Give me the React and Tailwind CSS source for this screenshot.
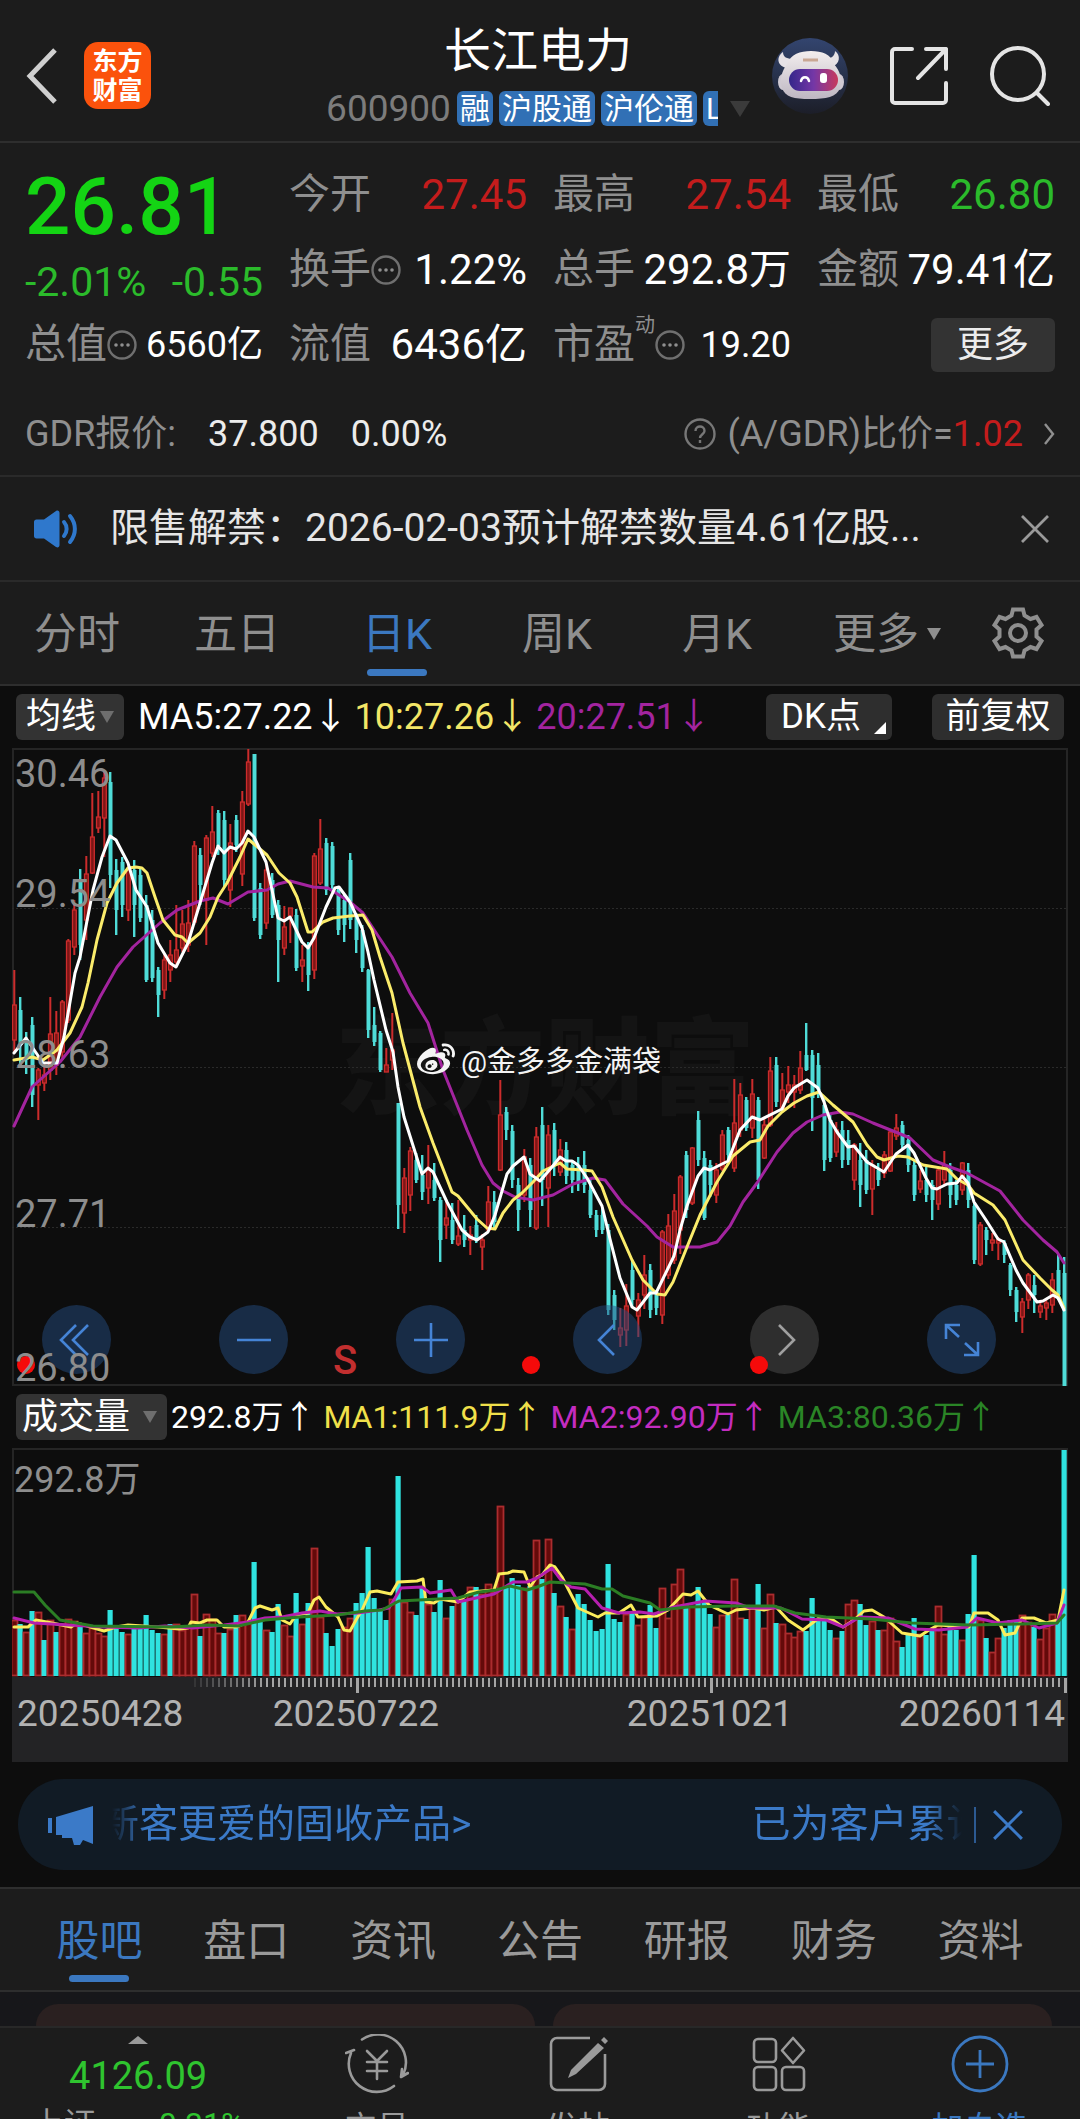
import { useState } from "react";
import { FaWeibo } from "react-icons/fa";

const UP = "#cc2c2c";
const DOWN = "#4fdcd8";

// each row: direction, high, low, body top, body bottom
const candles = `
r 230 312 265 300|c 257 325 270 305|c 292 334 300 320|c 277 367 285 355|r 328 380 330 345|r 322 351 335 343|r 257 340 294 330|r 271 335 293 325
r 260 320 262 312|r 199 283 201 280|r 160 215 170 207|c 129 220 140 205|r 116 200 134 180|r 53 134 97 133|r 51 93 77 88|r 32 117 38 78
c 32 148 42 135|c 119 195 130 170|c 117 177 122 165|r 125 181 130 170|c 120 197 130 165|c 128 182 135 178|c 155 242 165 240|c 170 242 180 238
c 227 277 230 255|r 213 259 220 250|r 200 242 215 230|r 165 226 210 222|r 170 212 184 208|r 160 212 183 205|r 101 185 106 182|c 108 165 115 145
r 95 205 98 160|r 66 117 92 113|c 70 115 73 106|c 71 147 80 140|r 84 167 103 150|c 75 112 80 105|r 51 146 62 134|r 9 66 22 64
c 14 181 14 178|c 143 199 148 195|r 122 189 130 183|c 133 178 140 175|c 160 242 165 200|r 166 215 187 208|r 168 203 168 176|c 169 231 175 228
r 205 242 220 226|c 202 251 206 235|r 113 239 116 230|r 79 145 109 143|c 98 155 103 150|c 102 152 106 145|c 148 195 150 190|c 155 202 160 185
c 113 189 120 180|c 173 213 176 200|c 185 232 190 228|c 229 298 230 290|c 267 306 285 302|c 291 332 293 330|r 308 332 325 332|r 273 330 310 320
c 363 489 363 465|r 428 493 438 473|r 407 471 411 455|c 413 443 420 440|c 415 460 435 452|r 405 464 430 448|c 423 461 440 458|c 457 522 460 500
r 460 499 478 485|c 463 504 480 500|r 460 506 496 504|c 475 507 490 500|r 486 515 495 500|c 475 503 485 500|r 494 530 500 507|r 446 492 462 490
c 451 490 462 482|r 340 431 375 430|c 367 400 372 390|c 385 448 391 440|c 438 491 445 470|r 409 462 417 455|c 418 487 425 470|r 387 490 397 488
c 367 466 385 440|r 385 487 395 448|c 383 436 390 425|r 399 436 410 432|c 402 444 410 436|c 420 453 425 440|c 417 451 425 442|c 411 453 425 445
c 440 478 450 475|c 470 497 475 490|c 468 494 475 490|c 484 575 490 570|c 550 590 555 580|r 568 607 588 595|r 544 606 566 590|c 520 568 530 560
r 553 597 560 576|r 515 569 535 555|c 524 578 530 570|c 550 575 552 568|r 490 584 492 575|r 474 539 486 535|r 454 524 471 520|r 435 514 437 490
c 411 478 415 470|r 407 465 408 463|c 371 426 380 420|c 411 480 418 478|c 420 457 425 445|r 423 463 430 455|r 390 431 395 429|c 387 422 390 415
r 339 432 383 428|r 343 397 355 390|c 357 391 360 388|r 339 398 354 388|c 357 449 360 440|r 378 419 385 418|r 317 387 331 385|c 317 367 325 362
r 333 372 350 368|r 326 363 345 352|r 335 368 345 352|r 311 354 328 350|c 283 331 315 330|c 310 391 315 358|c 313 358 325 350|c 357 431 365 420
c 375 422 380 418|r 382 417 390 412|c 381 428 390 420|c 390 425 400 420|r 403 450 405 440|c 403 467 420 445|c 410 454 420 450|r 420 475 425 449
c 423 446 430 440|r 411 438 415 433|r 390 432 392 431|r 374 400 388 396|c 381 408 385 405|c 395 432 400 425|c 420 461 425 455|r 430 453 441 449
c 427 462 440 455|c 440 480 445 460|r 426 470 430 464|r 411 446 425 440|c 423 468 430 455|c 440 465 445 460|r 422 455 423 450|c 423 468 430 460
c 462 524 466 520|r 482 526 485 524|c 487 515 490 500|r 493 511 500 503|r 497 520 500 503|c 500 523 503 515|c 523 556 525 550|c 547 582 550 572
r 558 593 562 577|r 533 569 535 560|c 535 573 545 555|r 560 578 566 572|r 558 580 563 568|r 533 573 540 565|c 515 560 530 555|c 517 646 533 646
`
    .trim()
    .split(/[|\n]/)
    .map((row) => {
        const [dir, ...nums] = row.split(" ");
        return [dir, ...nums.map(Number)];
    });

const volumes = `
r56 c52 r44 c65 r64 c36 r56 c44 r52 r57 r55 c51 r43 r48 r43 r40 c66 c49 c44 r42 c47 c47 c61 c46 c43 r42 c52 r52 r46 r49 r82 c40
r62 r57 r43 c43 r47 c61 r61 r55 c114 c56 r46 c44 c72 r51 r40 c83 r52 c73 r128 r59 c43 c30 c47 r49 r58 c73 c83 c129 c78 c65 c56 r77
c200 r74 r64 c61 c90 r72 c64 c96 r58 c70 r77 c75 r89 c89 r82 r92 r84 r170 c88 c98 c91 r88 c90 r136 c97 r137 c83 r70 c59 r47 c82 c72
c56 c45 c47 c112 c57 c54 r62 c65 r51 r59 c71 c48 r88 r58 r92 r107 c71 r70 c89 c74 c62 r49 r61 c61 r97 r58 c57 r70 c92 r48 r82 c53
r52 r43 r39 r45 c45 c78 c57 c55 c46 r38 c45 r72 r76 c72 c51 r55 c46 r46 r58 r35 c29 c42 c58 r42 c41 c47 r70 r42 c52 c46 r36 c62
c121 r56 c38 r24 r38 c48 c56 c56 r61 r54 c49 r37 r48 r62 c56 c226
`
    .trim()
    .split(/\s+/)
    .map((v) => [v[0], Number(v.slice(1))]);

const priceLines = [
    {
        color: "#a3249f",
        points:
            "14,386 32,347 60,322 80,297 100,257 117,227 133,207 160,183 177,170 200,161 213,158 228,164 248,152 267,150 278,144 290,141 313,147 328,148 350,162 363,173 392,217 410,253 428,283 443,330 467,390 482,425 493,443 503,451 515,457 533,460 553,455 573,444 593,438 605,440 623,464 647,486 657,497 673,507 700,507 717,502 730,486 743,462 757,443 777,412 793,393 807,382 823,375 840,372 853,374 873,383 898,393 910,398 933,420 950,427 967,433 1000,451 1023,480 1043,500 1057,512 1064,523",
    },
    {
        color: "#fbec6b",
        points:
            "14,320 32,317 43,320 57,310 70,293 82,267 88,243 97,200 107,163 117,143 128,128 136,127 142,128 147,133 155,157 163,180 175,195 182,197 188,203 200,193 210,177 218,157 227,143 240,117 248,99 254,104 267,115 279,133 290,143 297,157 308,192 312,192 323,182 333,178 350,176 363,175 372,190 380,217 392,253 403,303 420,367 433,403 452,452 458,456 477,479 487,488 495,489 503,473 513,460 522,453 533,442 543,431 560,423 567,429 583,430 592,431 602,447 613,477 632,520 643,540 657,554 665,555 673,542 687,507 700,475 717,442 733,416 750,402 760,400 768,386 782,372 794,363 807,356 819,352 833,365 853,382 867,405 877,417 884,420 898,416 908,417 923,425 947,429 957,439 968,445 974,453 993,465 1005,480 1023,520 1040,538 1052,550 1058,555 1064,568",
    },
    {
        color: "#ffffff",
        points:
            "14,313 26,298 43,323 57,323 64,297 75,233 80,217 93,150 102,117 110,96 116,100 128,123 136,150 147,167 158,203 170,223 176,227 188,203 200,163 212,123 218,106 224,113 230,107 236,109 242,103 248,91 254,97 266,122 278,178 284,181 290,177 302,202 308,208 314,198 326,167 335,148 339,147 350,162 362,188 368,212 374,240 386,290 393,312 398,347 404,377 422,434 428,428 433,432 447,462 462,490 470,497 477,500 488,492 495,475 507,434 513,426 524,417 530,434 540,441 552,427 560,417 566,421 572,421 578,425 587,438 602,466 610,499 620,538 632,567 637,570 650,553 656,553 674,516 680,490 687,466 698,436 704,428 710,430 728,421 740,390 752,377 760,380 782,369 788,356 794,348 807,340 818,348 824,362 830,380 837,392 848,407 854,406 867,422 884,432 896,414 908,405 914,413 926,438 932,448 937,449 947,444 957,443 962,436 968,443 974,462 986,480 998,499 1004,502 1016,530 1023,543 1037,562 1043,561 1053,555 1058,558 1064,570",
    },
];

const volumeLines = [
    {
        color: "#fbec5b",
        points:
            "14,179 28,179 36,172 52,175 71,179 77,175 104,183 116,179 128,177 158,179 179,181 188,180 191,174 200,175 207,172 217,172 224,179 236,179 248,174 255,160 260,158 272,162 278,160 282,172 290,176 296,167 308,165 314,152 319,149 326,159 338,169 344,182 350,183 356,172 362,162 370,144 377,143 391,146 398,134 417,133 423,131 426,154 434,155 440,151 458,154 470,144 494,142 499,126 508,125 513,123 524,124 530,139 537,129 542,127 550,117 555,119 562,129 578,160 598,169 605,165 619,165 631,157 638,169 657,168 668,162 683,146 691,147 698,143 709,157 728,166 736,162 753,160 764,162 776,159 788,172 803,182 819,170 833,172 843,179 854,172 864,163 872,162 884,169 902,185 920,188 929,182 938,177 969,179 974,165 988,165 998,172 1005,187 1015,185 1022,170 1034,170 1046,175 1058,172 1064,142",
    },
    {
        color: "#b51fae",
        points:
            "14,170 34,175 69,177 103,179 138,180 165,178 193,180 224,177 248,174 265,170 282,169 302,165 320,163 337,166 358,165 379,162 389,160 401,140 422,139 430,145 451,142 458,154 494,146 513,134 527,134 537,130 552,120 561,132 571,139 585,141 602,160 619,165 640,164 654,166 674,159 705,153 736,155 750,160 781,160 802,171 826,172 843,179 860,169 888,170 915,181 939,182 967,179 977,170 998,175 1022,172 1039,180 1057,175 1064,157",
    },
    {
        color: "#2b7d24",
        points:
            "14,144 34,144 45,157 60,172 93,178 172,179 207,177 238,178 265,172 300,169 337,167 365,163 382,162 399,153 458,150 479,144 496,142 510,138 527,142 537,139 550,134 585,136 602,141 612,141 623,148 650,155 660,162 688,159 733,158 774,158 795,165 826,169 871,171 912,175 970,177 1022,176 1057,175 1064,167",
    },
];

const priceLabels = [
    ["30.46", 47],
    ["29.54", 167],
    ["28.63", 328],
    ["27.71", 487],
    ["26.80", 641],
];

const dateLabels = [
    ["20250428", 17, "start"],
    ["20250722", 356, "middle"],
    ["20251021", 710, "middle"],
    ["20260114", 1065, "end"],
];

const xAt = (i) => 14 + i * 6;

const Line = ({ color, points }) => (
    <polyline points={points} fill="none" stroke={color} strokeWidth="3" strokeLinejoin="round" strokeLinecap="round" />
);

const PriceChart = () => (
    <svg viewBox="12 8 1056 638" className="block w-full h-auto" role="img" aria-label="日K线图">
        <text x="335" y="365" fontSize="105" fontWeight="900" fill="#141414">东方财富</text>
        <g fill="none" stroke="#252525" strokeWidth="2">
            <rect x="13" y="9" width="1054" height="636" />
        </g>
        <g stroke="#2a2a2a" strokeWidth="1" strokeDasharray="2 2">
            <path d="M12 168.500H1068M12 327.500H1068M12 487.500H1068" />
        </g>
        {candles.map(([dir, high, low, top, bottom], i) => {
            const x = xAt(i);
            if (dir === "c") {
                return (
                    <g key={i} fill={DOWN}>
                        <rect x={x - 1} y={high} width="2.400" height={low - high} />
                        <rect x={x - 1.5} y={top} width="4" height={bottom - top} />
                    </g>
                );
            }
            return (
                <g key={i}>
                    <rect x={x - 0.7} y={high} width="2" height={low - high} fill={UP} />
                    <rect x={x - 1.5} y={top} width="3.800" height={bottom - top} fill="#7d1616" stroke={UP} strokeWidth="1.300" />
                </g>
            );
        })}
        {priceLines.map((line) => (
            <Line key={line.color} {...line} />
        ))}
        <text x="345" y="634" textAnchor="middle" fontSize="40" fontWeight="500" fill="#c22f2f">S</text>
    </svg>
);

// labels and markers sit above the round buttons
const PriceOverlay = () => (
    <svg viewBox="12 8 1056 638" className="absolute inset-0 w-full h-full pointer-events-none">
        {[26, 531, 759].map((x) => (
            <circle key={x} cx={x} cy="625" r="9" fill="#f50a0a" />
        ))}
        {priceLabels.map(([label, y]) => (
            <text key={label} x="15" y={y} fontSize="38" fill="#8d8d8d">{label}</text>
        ))}
        <FaWeibo x="417" y="301" size="38" color="#f4f4f4" />
        <text x="461" y="332" fontSize="29" fill="#f4f4f4">@金多多金满袋</text>
    </svg>
);

const VolumeChart = () => (
    <svg viewBox="12 0 1056 314" className="block w-full h-auto" role="img" aria-label="成交量">
        <path d="M13 228V1H1067V228" fill="none" stroke="#252525" strokeWidth="2" />
        {volumes.map(([dir, h], i) =>
            dir === "c" ? (
                <rect key={i} x={xAt(i) - 2.5} y={228 - h} width="5.200" height={h} fill="#2fe3e0" />
            ) : (
                <rect key={i} x={xAt(i) - 2.5} y={228.5 - h} width="6" height={h - 1} fill="#640a0a" stroke="#ab2c2e" strokeWidth="1.800" />
            )
        )}
        {volumeLines.map((line) => (
            <Line key={line.color} {...line} />
        ))}
        <text x="14" y="44" fontSize="36" fill="#8d8d8d">292.8万</text>
        <rect x="12" y="229" width="1056" height="85" fill="#232325" />
        {Array.from({ length: 146 }, (_, n) => n + 30).map((i) => {
            const major = i === 57 || i === 116 || i === 175;
            return (
                <rect
                    key={i}
                    x={xAt(i)}
                    y="230"
                    width={major ? 3 : 2}
                    height={major ? 15 : 9}
                    fill="#a5a5a5"
                    opacity={Math.min(1, (i - 28) / 14)}
                />
            );
        })}
        {dateLabels.map(([label, x, anchor]) => (
            <text key={label} x={x} y="278" fontSize="37" fill="#b2b2b2" textAnchor={anchor}>{label}</text>
        ))}
    </svg>
);

const Robot = () => (
    <svg viewBox="0 0 76 76" className="w-[76px] h-[76px]">
        <defs>
            <linearGradient id="visor" x1="0" x2="1">
                <stop offset="0" stopColor="#34268a" />
                <stop offset="0.5" stopColor="#7437a6" />
                <stop offset="1" stopColor="#c8385c" />
            </linearGradient>
            <linearGradient id="disc" x1="0" y1="0" x2="0" y2="1">
                <stop offset="0" stopColor="#33456f" />
                <stop offset="1" stopColor="#1c1e28" />
            </linearGradient>
            <linearGradient id="helmet" x1="0" y1="0" x2="0" y2="1">
                <stop offset="0" stopColor="#f3eeee" />
                <stop offset="1" stopColor="#bdb6c2" />
            </linearGradient>
        </defs>
        <circle cx="38" cy="38" r="38" fill="url(#disc)" />
        <path d="M11 14c-6 4-7 13 3 16l7-9c-6 0-10-2-10-7zM63 13c6 4 5 13-3 16l-8-8c7 0 11-3 11-8z" fill="#e6e2e6" />
        <ellipse cx="11" cy="44" rx="5" ry="8" fill="#cfc9d2" />
        <ellipse cx="67" cy="44" rx="5" ry="8" fill="#cfc9d2" />
        <path d="M15 26C19 16 28 13 39 13s20 3 23 13c6 7 9 16 6 24-3 9-14 11-30 11S13 59 10 50c-3-8 0-17 5-24z" fill="url(#helmet)" />
        <path d="M31 22h15" stroke="#c9a793" strokeWidth="3" />
        <rect x="17" y="31" width="49" height="22" rx="11" fill="url(#visor)" />
        <path d="M29 43c1-5 7-5 8 0" fill="none" stroke="#fff" strokeWidth="2.500" strokeLinecap="round" />
        <rect x="48" y="35" width="7" height="10" rx="3" fill="#fff" />
    </svg>
);

const Dots = () => (
    <svg viewBox="0 0 30 30" className="w-[30px] h-[30px] shrink-0" fill="none" stroke="#6f6f6f" strokeWidth="2.400">
        <circle cx="15" cy="15" r="13.500" />
        <g fill="#8f8f8f" stroke="none">
            <circle cx="9" cy="15" r="1.800" />
            <circle cx="15" cy="15" r="1.800" />
            <circle cx="21" cy="15" r="1.800" />
        </g>
    </svg>
);

const Caret = ({ className = "" }) => (
    <svg viewBox="0 0 14 11" preserveAspectRatio="none" className={`shrink-0 ${className}`}>
        <path d="M0 0h14L7 11z" fill="currentColor" />
    </svg>
);

const Cross = ({ className = "" }) => (
    <svg viewBox="0 0 30 30" className={className} fill="none" stroke="currentColor" strokeWidth="2.800">
        <path d="M2 2l26 26M28 2L2 28" />
    </svg>
);

const Stat = ({ label, value, color = "text-white", dots, sup, small }) => (
    <div className="flex items-center whitespace-nowrap">
        <span className="text-[#8f8f8f]">{label}</span>
        {sup && <sup className="text-[20px] text-[#8f8f8f] -top-5">{sup}</sup>}
        {dots && <Dots />}
        <span className={`ml-auto ${small ? "text-[36px]" : "text-[42px]"} ${color}`}>{value}</span>
    </div>
);

const RoundButton = ({ label, muted, children }) => (
    <button
        aria-label={label}
        className={`w-[69px] h-[69px] rounded-full flex items-center justify-center ${muted ? "bg-[#505050]/50 text-[#a0a0a0]" : "bg-[#234b80]/50 text-[#4584d6]"}`}
    >
        <svg viewBox="0 0 36 36" className="w-9 h-9" fill="none" stroke="currentColor" strokeWidth="2.600">
            {children}
        </svg>
    </button>
);

const periods = ["分时", "五日", "日K", "周K", "月K", "更多"];
const sections = ["股吧", "盘口", "资讯", "公告", "研报", "财务", "资料"];

const App = () => {
    const [period, setPeriod] = useState("日K");
    const [section, setSection] = useState("股吧");

    return (
        <div className="min-h-screen overflow-x-hidden bg-[#1c1c1c] text-white font-['Roboto','Noto_Sans_CJK_SC',sans-serif]">
            {/* Header */}
            <header className="h-[143px] px-[26px] grid grid-cols-[1fr_auto_1fr] items-center border-b-2 border-[#2e2e2e]">
                <div className="flex items-center gap-[26px] pt-2.5">
                    <button aria-label="返回">
                        <svg viewBox="0 0 32 56" className="w-8 h-14" fill="none" stroke="#cfcfcf" strokeWidth="5">
                            <path d="M29 2L4 28l25 26" />
                        </svg>
                    </button>
                    <div className="w-[67px] h-[67px] rounded-[14px] bg-[#fb520c] flex flex-col items-center justify-center text-[25px] leading-[29px] font-bold">
                        <span>东方</span>
                        <span>财富</span>
                    </div>
                </div>
                <div className="flex flex-col items-center pt-3 pr-1">
                    <h1 className="text-[47px] leading-[64px]">长江电力</h1>
                    <div className="flex items-center h-[52px]">
                        <span className="text-[37px] text-[#7c7c7c] mr-1.5">600900</span>
                        <div className="flex gap-1.5 w-[261px] overflow-hidden text-[30px] leading-[35px] whitespace-nowrap">
                            {["融", "沪股通", "沪伦通", "LOF"].map((tag) => (
                                <span key={tag} className="bg-[#3170b5] rounded-md px-[3px]">{tag}</span>
                            ))}
                        </div>
                        <Caret className="w-5 h-4 ml-3 text-[#3b3b3b]" />
                    </div>
                </div>
                <div className="flex items-center justify-end gap-[42px] pt-2.5 pr-1">
                    <Robot />
                    <button aria-label="分享">
                        <svg viewBox="0 0 58 58" className="w-[58px] h-[58px]" fill="none" stroke="#e4e4e4" strokeWidth="4" strokeLinecap="round" strokeLinejoin="round">
                            <path d="M22 2H5a3 3 0 0 0-3 3v48a3 3 0 0 0 3 3h48a3 3 0 0 0 3-3V36M36 2h20v20M56 2L28 31" />
                        </svg>
                    </button>
                    <button aria-label="搜索">
                        <svg viewBox="0 0 60 60" className="w-[60px] h-[60px]" fill="none" stroke="#e4e4e4" strokeWidth="4" strokeLinecap="round">
                            <circle cx="28" cy="28" r="26" />
                            <path d="M47 47l11 11" />
                        </svg>
                    </button>
                </div>
            </header>

            {/* Quote */}
            <section className="border-b-2 border-[#2a2a2a] text-[41px]">
                <div className="px-[25px] pt-[14px] grid grid-cols-4 auto-rows-[75px] gap-x-[26px]">
                    <div className="row-span-2 pt-2.5">
                        <p className="text-[80px] leading-[80px] font-medium text-[#14d414]">26.81</p>
                        <p className="mt-1.5 flex justify-between text-[41px] leading-[58px] text-[#2bbb2b]">
                            <span>-2.01%</span>
                            <span>-0.55</span>
                        </p>
                    </div>
                    <Stat label="今开" value="27.45" color="text-[#c41c1c]" />
                    <Stat label="最高" value="27.54" color="text-[#c41c1c]" />
                    <Stat label="最低" value="26.80" color="text-[#2bbb2b]" />
                    <Stat label="换手" value="1.22%" dots />
                    <Stat label="总手" value="292.8万" />
                    <Stat label="金额" value="79.41亿" />
                    <Stat label="总值" value="6560亿" dots small />
                    <Stat label="流值" value="6436亿" />
                    <Stat label="市盈" value="19.20" sup="动" dots small />
                    <div className="flex items-center justify-end">
                        <button className="w-[124px] h-[54px] rounded-md bg-[#333333] text-[36px] leading-[50px] text-[#ececec]">更多</button>
                    </div>
                </div>
                <div className="h-[93px] px-[25px] pt-2.5 flex items-center text-[36px] text-[#8f8f8f] whitespace-nowrap">
                    <span>GDR报价:</span>
                    <span className="ml-8 text-[#ececec]">37.800</span>
                    <span className="ml-8 text-[#ececec]">0.00%</span>
                    <a href="#gdr" className="ml-auto flex items-center">
                        <svg viewBox="0 0 32 32" className="w-8 h-8 mr-3" fill="none" stroke="#777777" strokeWidth="2.400">
                            <circle cx="16" cy="16" r="14.500" />
                            <path d="M11.500 13c0-6 9-6 9 0 0 3-4.500 3.500-4.500 7M16 22v3" />
                        </svg>
                        (A/GDR)比价=<span className="text-[#c41c1c]">1.02</span>
                        <svg viewBox="0 0 12 24" className="w-3 h-6 ml-5" fill="none" stroke="#8f8f8f" strokeWidth="2.400">
                            <path d="M2 2l8 10-8 10" />
                        </svg>
                    </a>
                </div>
            </section>

            {/* Notice */}
            <section className="h-[105px] pl-8 pr-[30px] flex items-center border-b-2 border-[#2a2a2a]">
                <svg viewBox="0 0 46 38" className="w-[46px] h-[38px] shrink-0" fill="#2f78cc">
                    <path d="M2 12c0-1.500 1-2.500 2.500-2.500H12L24 1c2-1 3.500 0 3.500 2v32c0 2-1.500 3-3.500 2l-12-8.500H4.500C3 28.500 2 27.500 2 26z" />
                    <path d="M32 12c3.500 4 3.500 10 0 14M38 6c6.500 8 6.500 18 0 26" fill="none" stroke="#2f78cc" strokeWidth="4" strokeLinecap="round" />
                </svg>
                <p className="ml-8 text-[39px] text-[#e6e6e6] whitespace-nowrap">限售解禁：2026-02-03预计解禁数量4.61亿股...</p>
                <button aria-label="关闭公告" className="ml-auto text-[#9a9a9a]">
                    <Cross className="w-[30px] h-[30px]" />
                </button>
            </section>

            {/* Period tabs */}
            <nav className="h-[104px] grid grid-cols-[repeat(6,4fr)_3fr] border-b-2 border-[#2e2e2e]">
                {periods.map((name) => (
                    <button
                        key={name}
                        onClick={() => setPeriod(name)}
                        className={`relative flex items-center justify-center pt-0.5 text-[43px] ${name === "更多" ? "pl-3.5" : "pr-1.5"} ${period === name ? "text-[#3b78c0]" : "text-[#8f8f8f]"}`}
                    >
                        {name}
                        {name === "更多" && <Caret className="w-3.5 h-3 ml-2" />}
                        {period === name && <span className="absolute bottom-2 w-[60px] h-[7px] rounded-sm bg-[#3b78c0]" />}
                    </button>
                ))}
                <button aria-label="设置" className="flex items-center justify-center pr-1 text-[#8f8f8f]">
                    <svg viewBox="-26 -26 52 52" className="w-[52px] h-[52px]" fill="none" stroke="currentColor" strokeWidth="4">
                        <path d="M-5-23.500H5L6.500-17.500 12.500-14 18.500-16 23.500-8 18.500-3.500V3.500L23.500 8 18.500 16 12.500 14 6.500 17.500 5 23.500H-5L-6.500 17.500-12.500 14-18.500 16-23.500 8-18.500 3.500V-3.500L-23.500-8-18.500-16-12.500-14-6.500-17.500z" />
                        <circle r="8" />
                    </svg>
                </button>
            </nav>

            {/* Charts */}
            <main className="bg-[#0d0d0d] px-3 pb-[17px]">
                <div className="h-[62px] px-1 flex items-center text-[36px] whitespace-nowrap">
                    <button className="h-[46px] w-[108px] rounded-md bg-[#333333] text-[35px] leading-[46px] flex items-center justify-center gap-1">
                        均线
                        <Caret className="w-3.5 h-3 text-[#6e6e6e]" />
                    </button>
                    <span className="ml-[14px]">MA5:27.22↓</span>
                    <span className="ml-1.5 text-[#f3e667]">10:27.26↓</span>
                    <span className="ml-1.5 text-[#a3249f]">20:27.51↓</span>
                    <button className="ml-auto relative h-[46px] w-[126px] rounded-md bg-[#2e2e2e] text-[35px] leading-[46px] pr-4">
                        DK点
                        <svg viewBox="0 0 12 12" className="absolute right-1.5 bottom-1.5 w-3 h-3">
                            <path d="M12 0v12H0z" fill="#fff" />
                        </svg>
                    </button>
                    <button className="ml-10 h-[46px] w-[132px] rounded-md bg-[#2e2e2e] text-[35px] leading-[46px]">前复权</button>
                </div>

                <div className="relative">
                    <PriceChart />
                    <div className="absolute bottom-3 left-[30px] right-[72px] flex justify-between">
                        <RoundButton label="最早">
                            <path d="M17 3L2 18l15 15M29 3L14 18l15 15" />
                        </RoundButton>
                        <RoundButton label="缩小">
                            <path d="M1 18h34" />
                        </RoundButton>
                        <RoundButton label="放大">
                            <path d="M1 18h34M18 1v34" />
                        </RoundButton>
                        <RoundButton label="向左">
                            <path d="M24 3L9 18l15 15" />
                        </RoundButton>
                        <RoundButton label="向右" muted>
                            <path d="M12 3l15 15-15 15" />
                        </RoundButton>
                        <RoundButton label="全屏">
                            <path d="M2 17V3h14M2 3l13 12M34 20v13H20M34 33L21 21" />
                        </RoundButton>
                    </div>
                    <PriceOverlay />
                </div>

                <div className="h-[62px] px-1 flex items-center text-[32px] whitespace-nowrap">
                    <button className="h-[46px] w-[151px] rounded-md bg-[#333333] text-[36px] leading-[46px] px-1.5 flex items-center justify-between">
                        成交量
                        <Caret className="w-3.5 h-3 mr-1 text-[#6e6e6e]" />
                    </button>
                    <span className="ml-1">292.8万↑</span>
                    <span className="ml-2 text-[#f0e04a]">MA1:111.9万↑</span>
                    <span className="ml-2 text-[#c32cc0]">MA2:92.90万↑</span>
                    <span className="ml-2 text-[#2a8526]">MA3:80.36万↑</span>
                </div>
                <VolumeChart />

                <div className="mt-[17px] mx-1.5 h-[91px] rounded-full bg-[#111b25] pl-[30px] pr-[38px] flex items-center text-[#3b7ac8]">
                    <svg viewBox="0 0 46 40" className="w-[46px] h-10 shrink-0" fill="currentColor">
                        <path d="M0 13h4v15H0zM8 12L45 1v38l-10-4-3 5h-6l-2-7H14v-3H8z" />
                    </svg>
                    <a
                        href="#promo"
                        className="ml-[18px] flex-1 overflow-hidden text-[39px] whitespace-nowrap flex [mask-image:linear-gradient(to_right,transparent,#000_4%,#000_96%,transparent)]"
                    >
                        <span className="-ml-3">新客更爱的固收产品&gt;</span>
                        <span className="ml-[280px]">已为客户累计</span>
                    </a>
                    <span className="ml-3 w-0.5 h-9 bg-[#2c5a92]" />
                    <button aria-label="关闭推广" className="ml-4">
                        <Cross className="w-8 h-8" />
                    </button>
                </div>
            </main>

            {/* Section tabs */}
            <nav className="h-[105px] px-[26px] grid grid-cols-7 border-y-2 border-[#2e2e2e]">
                {sections.map((name) => (
                    <button
                        key={name}
                        onClick={() => setSection(name)}
                        className={`relative flex items-center justify-center pt-1 text-[43px] ${section === name ? "text-[#3b78c0]" : "text-[#9a9a9a]"}`}
                    >
                        {name}
                        {section === name && <span className="absolute bottom-2 w-[60px] h-[7px] rounded-sm bg-[#3b78c0]" />}
                    </button>
                ))}
            </nav>

            <div className="h-[34px] pt-3 pl-9 pr-7 grid grid-cols-2 gap-[18px] bg-[#17171a]">
                <div className="rounded-t-[24px] bg-[#2a2020]" />
                <div className="rounded-t-[24px] bg-[#2a2020]" />
            </div>

            {/* Bottom bar */}
            <footer className="h-[94px] overflow-hidden grid grid-cols-[11fr_8fr_8fr_8fr_8fr] border-t-2 border-[#282828] text-[32px] text-[#9a9a9a]">
                <div className="flex flex-col items-center pt-2">
                    <Caret className="w-5 h-2 rotate-180" />
                    <span className="text-[38px] leading-[64px] text-[#2fc42f]">4126.09</span>
                    <p className="flex items-center gap-[54px] leading-[32px]">
                        <span>上证</span>
                        <span className="text-[#2fc42f]">-0.31%</span>
                    </p>
                </div>
                <a href="#trade" className="flex flex-col items-center gap-2 pt-1.5">
                    <svg viewBox="0 0 64 60" className="w-16 h-[60px] shrink-0" fill="none" stroke="currentColor" strokeWidth="2.600" strokeLinecap="round" strokeLinejoin="round">
                        <path d="M17 5.500A28 28 0 0 1 58 41M49 52A28 28 0 0 1 6 19M1 19l8-3M63 39l-7 4 1-8" />
                        <path d="M22 17l10 10 10-10M32 27v18M22 28h20M22 37h20" />
                    </svg>
                    <span className="leading-[52px]">交易</span>
                </a>
                <a href="#post" className="flex flex-col items-center gap-2 pt-1.5">
                    <svg viewBox="0 0 60 60" className="w-[60px] h-[60px] shrink-0" fill="none" stroke="currentColor" strokeWidth="2.600" strokeLinejoin="round">
                        <path d="M42 4H9a6 6 0 0 0-6 6v40a6 6 0 0 0 6 6h42a6 6 0 0 0 6-6V20" />
                        <path d="M50 9l6 5-28 26-8 4 3-8zM53 6l3-3 4 4-3 3z" fill="currentColor" stroke="none" />
                    </svg>
                    <span className="leading-[52px]">发帖</span>
                </a>
                <a href="#features" className="flex flex-col items-center gap-2 pt-1.5">
                    <svg viewBox="0 0 54 60" className="w-[54px] h-[60px] shrink-0" fill="none" stroke="currentColor" strokeWidth="2.600" strokeLinejoin="round">
                        <rect x="2" y="5" width="22" height="23" rx="4" />
                        <rect x="2" y="33" width="22" height="23" rx="4" />
                        <rect x="30" y="33" width="22" height="23" rx="4" />
                        <path d="M41 4l11 12.500L41 29 30 16.500z" />
                    </svg>
                    <span className="leading-[52px]">功能</span>
                </a>
                <a href="#watch" className="flex flex-col items-center gap-2 pt-1.5 text-[#3b78c0]">
                    <svg viewBox="0 0 60 60" className="w-[60px] h-[60px] shrink-0" fill="none" stroke="currentColor" strokeWidth="2.800">
                        <circle cx="30" cy="30" r="27" />
                        <path d="M16 30h28M30 16v28" />
                    </svg>
                    <span className="leading-[52px]">加自选</span>
                </a>
            </footer>
        </div>
    );
};

export default App;
